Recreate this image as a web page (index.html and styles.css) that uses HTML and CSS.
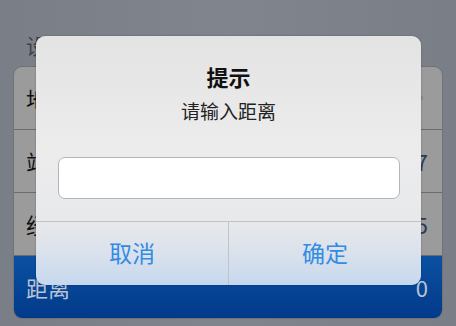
FILE: index.html
```html
<!DOCTYPE html>
<html lang="zh">
<head>
<meta charset="utf-8">
<link rel="stylesheet" href="styles.css">
</head>
<body>
<div class="screen">
  <div class="section-title">设置</div>
  <div class="group">
    <div class="row"><span class="label">地区</span><span class="chev"></span></div>
    <div class="row"><span class="label">站点</span><span class="value">7</span></div>
    <div class="row"><span class="label">经度</span><span class="value">5</span></div>
    <div class="row selected"><span class="label">距离</span><span class="value">0</span></div>
  </div>
  <div class="dialog">
    <div class="dialog-body">
      <div class="dialog-title">提示</div>
      <div class="dialog-msg">请输入距离</div>
      <div class="dialog-input"></div>
    </div>
    <div class="dialog-buttons">
      <div class="btn">取消</div>
      <div class="btn">确定</div>
    </div>
  </div>
</div>
</body>
</html>
```
FILE: styles.css
```css
html, body {
  margin: 0;
  padding: 0;
}
body {
  width: 456px;
  height: 326px;
  overflow: hidden;
  background: #7c8088;
  font-family: "Noto Sans CJK SC", "Noto Sans", sans-serif;
}
.screen {
  position: relative;
  width: 456px;
  height: 326px;
  background: linear-gradient(90deg, #7a7e86, #80848c 50%, #7a7e86);
}
.section-title {
  padding: 31px 0 0 26px;
  height: 35px;
  font-size: 21px;
  line-height: 28px;
  color: #3e4149;
}
.group {
  margin: 0 13px;
  border-radius: 9px;
  overflow: hidden;
  background: #9b9b9b;
  border: 1px solid #6f7276;
}
.row {
  height: 62px;
  display: flex;
  align-items: center;
  justify-content: space-between;
  padding: 0 14px 0 12px;
  border-bottom: 1px solid #6c6c6c;
  font-size: 22px;
  color: #111;
}
.row:last-child {
  border-bottom: none;
}
.value {
  color: #2c3a55;
  font-size: 22px;
}
.chev {
  width: 0;
  height: 0;
  border-left: 6px solid #8a8a8a;
  border-top: 6px solid transparent;
  border-bottom: 6px solid transparent;
  margin-right: 4px;
}
.row.selected {
  background: linear-gradient(180deg, #0b50a2, #023a8a);
  color: #b9c3d3;
}
.row.selected .value {
  color: #b9c3d3;
}
.dialog {
  position: absolute;
  left: 36px;
  top: 36px;
  width: 385px;
  height: 249px;
  border-radius: 9px;
  overflow: hidden;
  display: flex;
  flex-direction: column;
  background: linear-gradient(180deg, #e3e3e4 0%, #ececed 45%, #e8e9eb 74%, #dde3ec 85%, #c6d8ee 100%);
  box-shadow: 0 0 2px rgba(0,0,0,0.3);
}
.dialog-body {
  height: 185px;
  display: flex;
  flex-direction: column;
  align-items: center;
  border-bottom: 1px solid #c2c3c6;
}
.dialog-title {
  margin-top: 25px;
  font-size: 22px;
  font-weight: bold;
  line-height: 30px;
  color: #111;
}
.dialog-msg {
  margin-top: 6px;
  font-size: 19px;
  line-height: 28px;
  color: #222;
}
.dialog-input {
  margin-top: 32px;
  width: 340px;
  height: 40px;
  background: #fff;
  border: 1px solid #b4b5b8;
  border-radius: 7px;
}
.dialog-buttons {
  flex: 1;
  display: flex;
}
.btn {
  flex: 1;
  display: flex;
  align-items: center;
  justify-content: center;
  padding-bottom: 4px;
  font-size: 23px;
  color: #338be4;
}
.btn + .btn {
  border-left: 1px solid #c2c3c6;
}
```
